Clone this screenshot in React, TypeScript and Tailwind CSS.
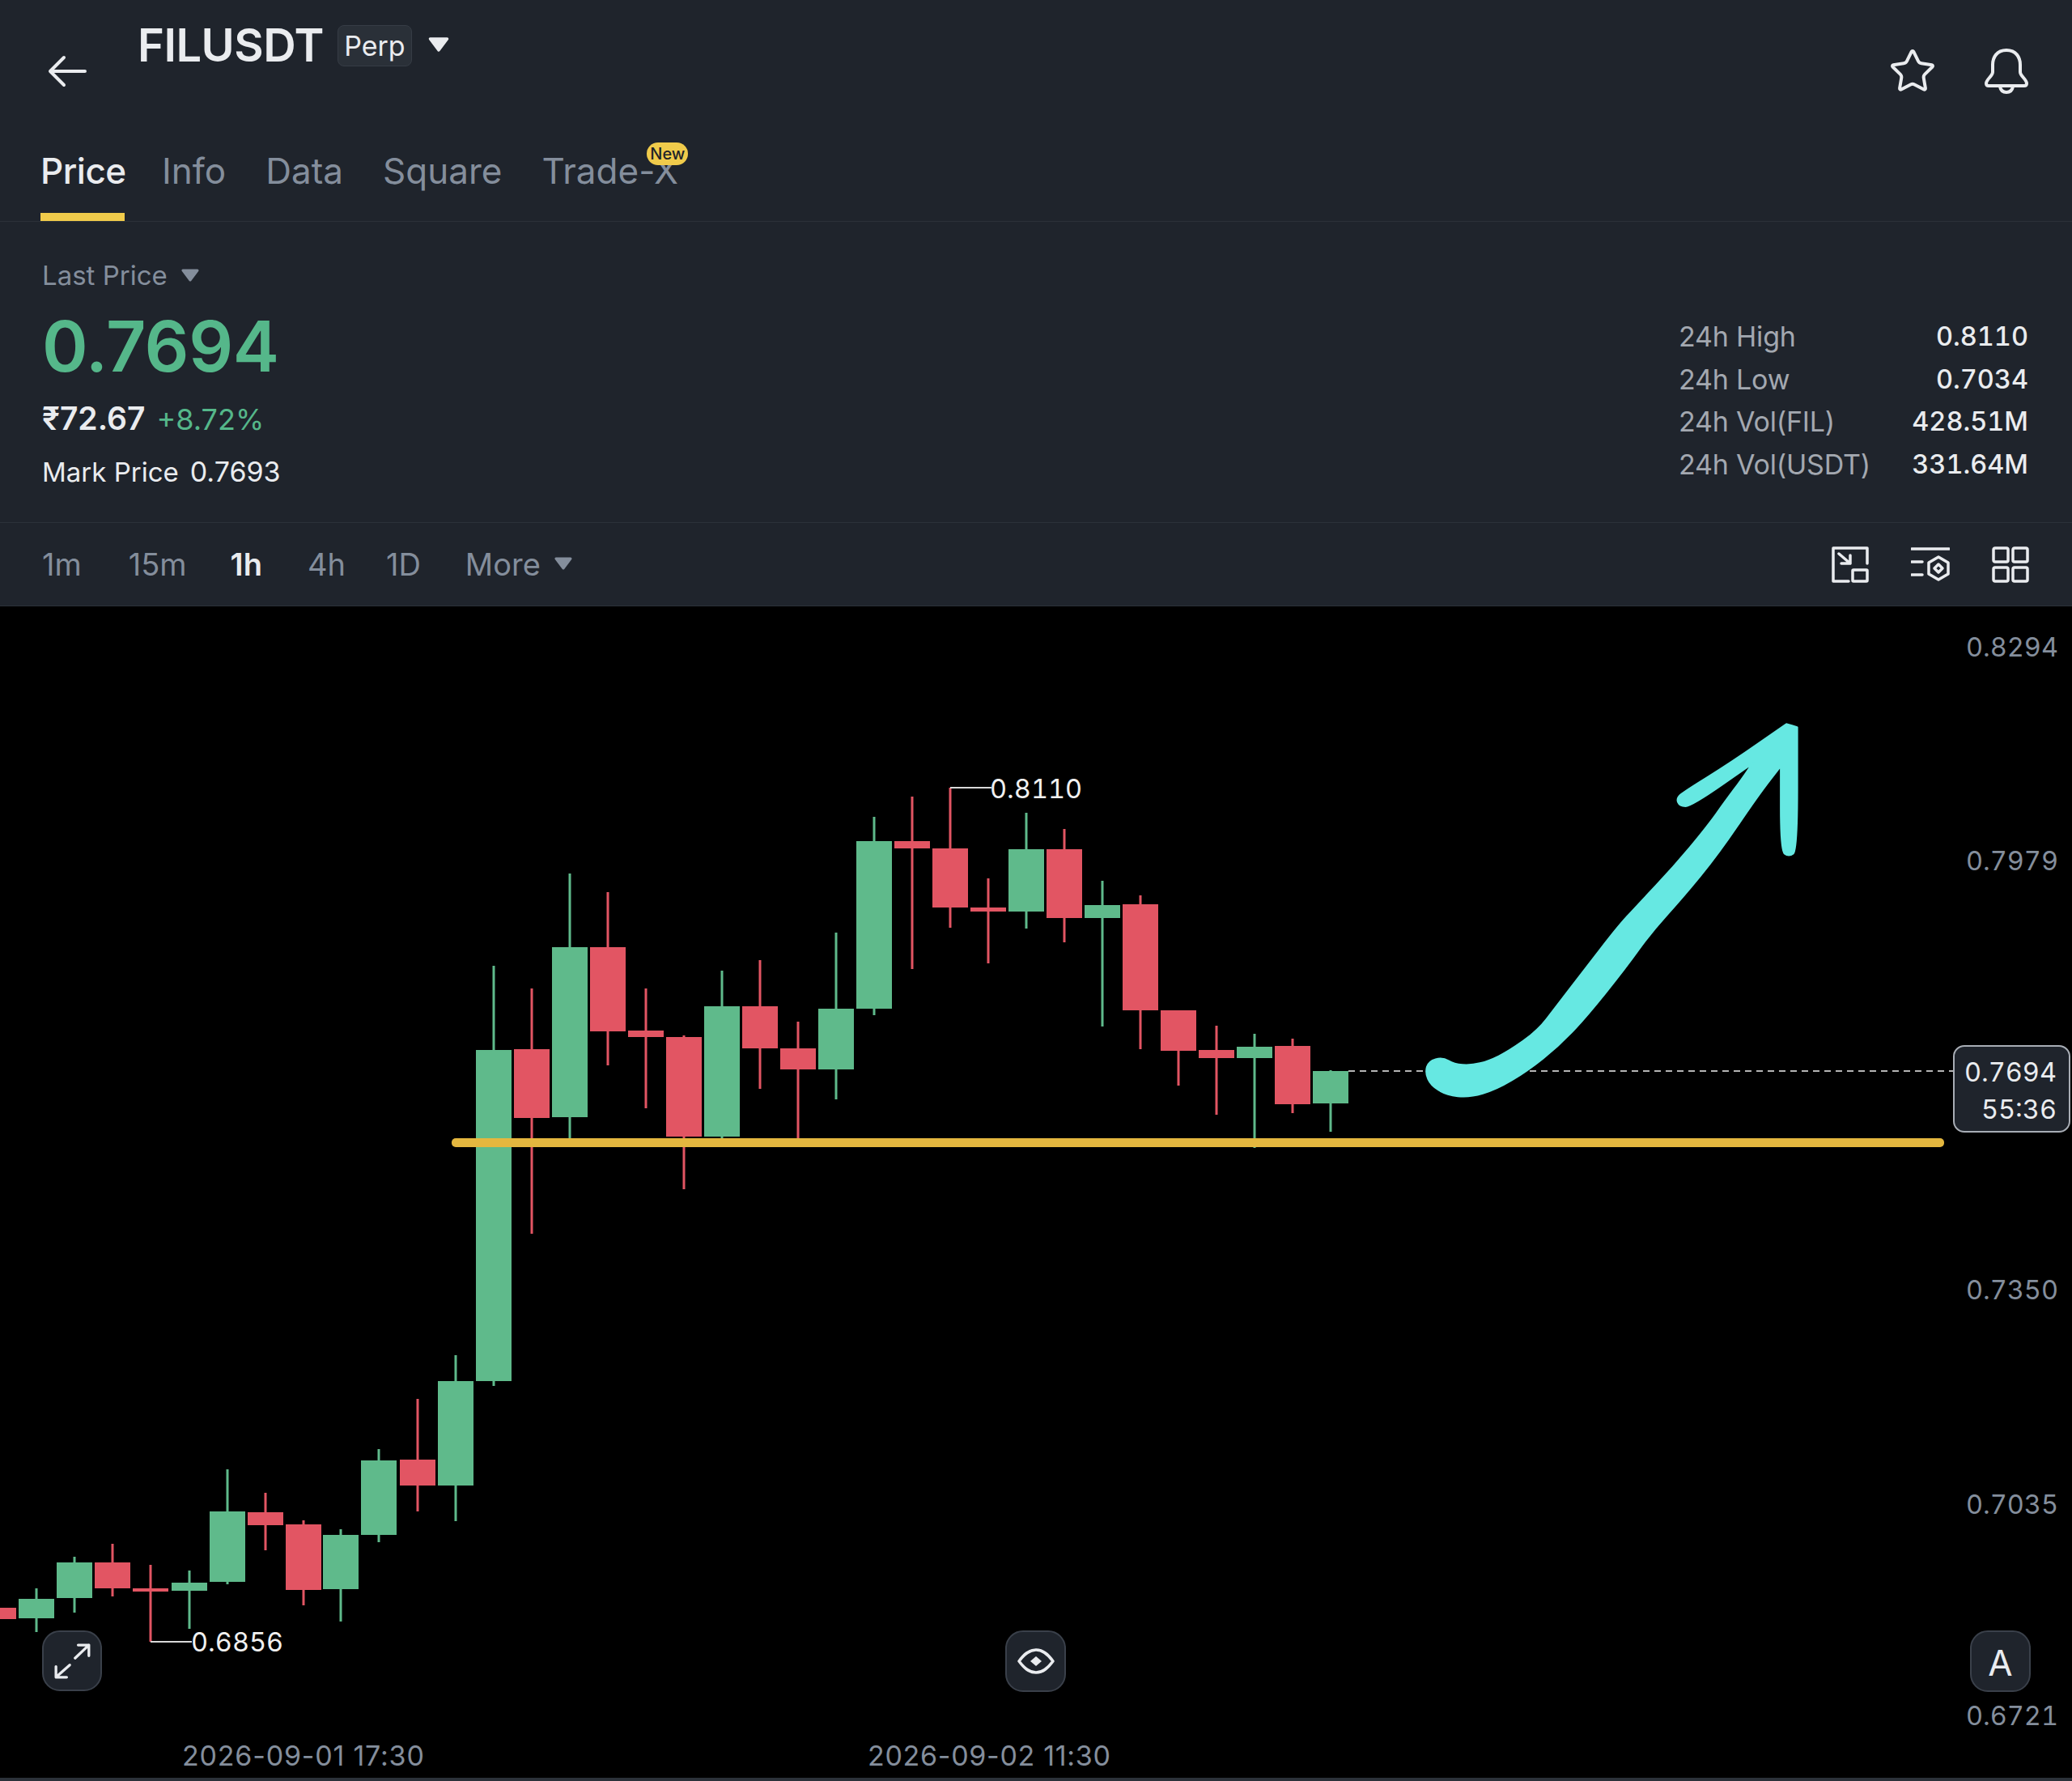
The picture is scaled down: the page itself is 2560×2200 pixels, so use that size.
import React from 'react';
import { Star } from 'lucide-react';

// [centre x, body top, body bottom, wick top, wick bottom, green?]
type Candle = [number, number, number, number, number, boolean];

const GREEN = '#5fba8b';
const RED = '#e25563';

const CANDLES: Candle[] = [
  [-2, 1986, 2000, 1930, 2000, false],
  [45, 1975, 1999, 1962, 2016, true],
  [92, 1930, 1974, 1923, 1992, true],
  [139, 1930, 1962, 1907, 1972, false],
  [186, 1962, 1966, 1933, 2028, false],
  [234, 1955, 1965, 1940, 2012, true],
  [281, 1867, 1954, 1815, 1957, true],
  [328, 1868, 1884, 1844, 1915, false],
  [375, 1883, 1964, 1878, 1983, false],
  [421, 1896, 1963, 1889, 2003, true],
  [468, 1804, 1896, 1790, 1905, true],
  [516, 1803, 1835, 1728, 1867, false],
  [563, 1706, 1835, 1674, 1879, true],
  [610, 1297, 1706, 1193, 1712, true],
  [657, 1296, 1381, 1221, 1524, false],
  [704, 1170, 1380, 1079, 1408, true],
  [751, 1170, 1274, 1102, 1316, false],
  [798, 1273, 1281, 1221, 1369, false],
  [845, 1281, 1404, 1279, 1469, false],
  [892, 1243, 1404, 1199, 1408, true],
  [939, 1243, 1295, 1186, 1345, false],
  [986, 1295, 1321, 1262, 1408, false],
  [1033, 1246, 1321, 1152, 1358, true],
  [1080, 1039, 1246, 1009, 1254, true],
  [1127, 1039, 1048, 984, 1197, false],
  [1174, 1048, 1121, 973, 1146, false],
  [1221, 1121, 1126, 1085, 1190, false],
  [1268, 1049, 1126, 1004, 1147, true],
  [1315, 1049, 1134, 1024, 1164, false],
  [1362, 1118, 1134, 1088, 1268, true],
  [1409, 1117, 1248, 1106, 1296, false],
  [1456, 1248, 1298, 1248, 1341, false],
  [1503, 1297, 1307, 1267, 1377, false],
  [1550, 1293, 1307, 1277, 1418, true],
  [1597, 1292, 1364, 1283, 1375, false],
  [1644, 1323, 1363, 1322, 1398, true],
];

const STATS = [
  ['24h High', '0.8110'],
  ['24h Low', '0.7034'],
  ['24h Vol(FIL)', '428.51M'],
  ['24h Vol(USDT)', '331.64M'],
];

// outline of the hand drawn arrow, read off a crop (1568 units square over 860x600).
// doubled points keep the corners sharp
const ARROW_POINTS = [
  [112, 1215], [120, 1178], [150, 1166], [175, 1188], [215, 1192], [255, 1178], [300, 1146], [365, 1080],
  [405, 1005], [470, 885], [545, 745], [590, 675], [672, 550], [745, 425], [790, 335], [825, 268],
  [850, 215], [850, 215], [710, 355], [685, 355], [678, 330], [695, 308], [800, 215], [925, 90], [925, 90],
  [948, 100], [948, 100], [948, 498], [930, 518], [913, 498], [913, 222], [913, 222], [860, 320], [770, 510],
  [690, 650], [620, 760], [560, 880], [470, 1040], [410, 1130], [340, 1210], [270, 1270], [210, 1295],
  [160, 1287], [125, 1257],
];

const smoothPath = (pts: number[][]) => {
  const mid = (a: number[], b: number[]) => `${(a[0] + b[0]) / 2} ${(a[1] + b[1]) / 2}`;
  let d = `M${mid(pts[pts.length - 1], pts[0])}`;
  pts.forEach((p, i) => {
    d += ` Q${p[0]} ${p[1]} ${mid(p, pts[(i + 1) % pts.length])}`;
  });
  return d + ' Z';
};

const Triangle = ({ className }: { className: string }) => (
  <svg viewBox="0 0 24 16" className={className} fill="currentColor" stroke="currentColor" strokeWidth="3" strokeLinejoin="round">
    <path d="M3 2 H21 L12 14 Z" />
  </svg>
);

const BackIcon = () => (
  <svg viewBox="0 0 48 40" className="w-[48px] h-[40px]" fill="none" stroke="#eaecef" strokeWidth="4" strokeLinecap="round" strokeLinejoin="round">
    <path d="M46 20 H3 M20 3 L3 20 L20 37" />
  </svg>
);

const BellIcon = () => (
  <svg viewBox="0 0 54 56" className="w-[54px] h-[56px]" fill="none" stroke="#eaecef" strokeWidth="4" strokeLinejoin="round" strokeLinecap="round">
    <path d="M27 2 C15 2 10 11 10 20 V29 C10 34 2 38 2 43 C2 45 3 46 5 46 H49 C51 46 52 45 52 43 C52 38 44 34 44 29 V20 C44 11 39 2 27 2 Z" />
    <path d="M19 47 C20 52 23 54 27 54 C31 54 34 52 35 47" />
  </svg>
);

const PipIcon = () => (
  <svg viewBox="0 0 46 45" className="w-[46px] h-[45px]" fill="none" stroke="#eaecef" strokeWidth="3.5" strokeLinejoin="round" strokeLinecap="round">
    <path d="M44 21 V2 H2 V43 H21" />
    <rect x="26" y="29" width="18" height="14" rx="1" />
    <path d="M9 9 L23 21 M23 11 V21 H12" />
  </svg>
);

const IndicatorIcon = () => (
  <svg viewBox="0 0 48 45" className="w-[48px] h-[45px]" fill="none" stroke="#eaecef" strokeWidth="3.5" strokeLinejoin="round" strokeLinecap="round">
    <path d="M1 3 H47 M1 19 H14 M1 35 H14" />
    <path d="M34 13 L46 20 V34 L34 41 L22 34 V20 Z" />
    <path d="M34 22 L39 27 L34 32 L29 27 Z" />
  </svg>
);

const GridIcon = () => (
  <svg viewBox="0 0 46 45" className="w-[46px] h-[45px]" fill="none" stroke="#eaecef" strokeWidth="3.5" strokeLinejoin="round">
    <rect x="2" y="2" width="18" height="17" rx="2" />
    <rect x="26" y="2" width="18" height="17" rx="2" />
    <rect x="2" y="26" width="18" height="17" rx="2" />
    <rect x="26" y="26" width="18" height="17" rx="2" />
  </svg>
);

const ExpandIcon = () => (
  <svg viewBox="0 0 74 75" className="w-[74px] h-[75px]" fill="none" stroke="#eaecef" strokeWidth="3.5" strokeLinecap="round" strokeLinejoin="round">
    <path d="M41 34 L59 17 M45 17 H59 V31" />
    <path d="M34 43 L16 59 M16 45 V59 H30" />
  </svg>
);

const EyeIcon = () => (
  <svg viewBox="0 0 48 34" className="w-[48px] h-[34px]" fill="none" stroke="#eaecef" strokeWidth="3.5" strokeLinejoin="round">
    <path d="M3 17 C9 9 15 3 24 3 C33 3 39 9 45 17 C39 25 33 31 24 31 C15 31 9 25 3 17 Z" />
    <path d="M24 11 L31 17 L24 23 L17 17 Z" fill="#eaecef" stroke="none" />
  </svg>
);

const HandArrow = () => (
  <svg x="1700" y="860" width="860" height="600" viewBox="0 0 1568 1568" preserveAspectRatio="none">
    <path fill="#66e8e2" stroke="#66e8e2" strokeWidth="6" strokeLinejoin="round" d={smoothPath(ARROW_POINTS)} />
  </svg>
);

const PriceChart = () => (
  <svg viewBox="0 749 2560 1446" className="absolute inset-0 w-[2560px] h-[1446px]">
    {CANDLES.map(([x, top, bottom, wickTop, wickBottom, up], i) => {
      const color = up ? GREEN : RED;
      return (
        <g key={i} fill={color}>
          <rect x={x - 1.5} y={wickTop} width="3" height={wickBottom - wickTop} />
          <rect x={x - 22} y={top} width="44" height={bottom - top} />
        </g>
      );
    })}
    <path d="M186 2028 H237 M1174 973 H1225" stroke="#d8d8d8" strokeWidth="2" />
    <path d="M1666 1323 H2414" stroke="#b5b5b5" strokeWidth="2" strokeDasharray="8 6" />
    <rect x="558" y="1406" width="1844" height="11" rx="5" fill="#e4b73f" />
    <HandArrow />
  </svg>
);

const App: React.FC = () => {
  return (
    <div className="w-[2560px] h-[2200px] flex flex-col bg-[#1f242c] text-[#eaecef] font-['Inter',sans-serif] overflow-hidden">
      {/* title bar */}
      <div className="h-[150px] flex items-start pl-[59px] pr-[54px]">
        <div className="mt-[68px]">
          <BackIcon />
        </div>
        <div className="ml-[63px] mt-[30px] flex items-center">
          <span className="text-[56px] leading-[52px] font-semibold tracking-[-0.5px]">FILUSDT</span>
          <span className="ml-[17px] h-[51px] w-[92px] flex items-center justify-center rounded-[8px] bg-[#2a3038] border border-[#363c45] text-[34px] font-normal">Perp</span>
          <Triangle className="ml-[19px] w-[28px] h-[20px] text-[#eaecef] -mt-[2px]" />
        </div>
        <div className="ml-auto mt-[58px] flex items-center gap-[59px]">
          <Star className="w-[60px] h-[60px] text-[#eaecef]" strokeWidth={1.6} />
          <BellIcon />
        </div>
      </div>

      {/* tabs */}
      <div className="h-[124px] flex items-stretch gap-[49px] pl-[50px] border-b border-[#2b3139] text-[44px] leading-[52px] font-normal text-[#848e9c]">
        <div className="pt-[35px] border-b-[10px] border-[#f0cb4b] text-[#eaecef] font-medium tracking-[-0.5px] w-[104px] -mr-[3px]">Price</div>
        <div className="pt-[35px]">Info</div>
        <div className="pt-[35px]">Data</div>
        <div className="pt-[35px]">Square</div>
        <div className="pt-[35px] relative">
          Trade-X
          <span className="absolute left-[130px] top-[26px] w-[51px] h-[28px] rounded-[14px] bg-[#f0cb4b] text-[#1e2329] text-[20px] leading-[28px] text-center font-medium">New</span>
        </div>
      </div>

      {/* price summary */}
      <div className="h-[372px] flex justify-between pl-[52px] pr-[54px] border-b border-[#2b3139]">
        <div className="pt-[46px] flex flex-col">
          <div className="flex items-center gap-[16px] text-[33px] leading-[40px] text-[#848e9c]">
            Last Price
            <Triangle className="w-[24px] h-[16px]" />
          </div>
          <div className="mt-[25px] text-[86px] leading-[86px] font-semibold text-[#55b78a] tracking-[-0.5px]">0.7694</div>
          <div className="mt-[26px] flex items-baseline gap-[14px] leading-[40px]">
            <span className="text-[39px] font-semibold">₹72.67</span>
            <span className="text-[36px] text-[#55b78a]">+8.72%</span>
          </div>
          <div className="mt-[25px] flex items-baseline gap-[14px] text-[33px] leading-[40px]">
            <span>Mark Price</span>
            <span className="text-[34px]">0.7693</span>
          </div>
        </div>
        <div className="pt-[116px] w-[432px] flex flex-col text-[34px] leading-[52px]">
          {STATS.map(([label, value]) => (
            <div key={label} className="h-[52.5px] flex justify-between items-center">
              <span className="text-[#a3a8b0] tracking-[-0.2px]">{label}</span>
              <span className="font-medium text-[32.5px] tabular-nums">{value}</span>
            </div>
          ))}
        </div>
      </div>

      {/* interval bar */}
      <div className="h-[103px] shrink-0 flex items-center pl-[52px] pr-[53px] text-[38px] text-[#848e9c] border-b border-[#2b3139]">
        <span>1m</span>
        <span className="ml-[58px]">15m</span>
        <span className="ml-[54px] text-[#eaecef] font-semibold">1h</span>
        <span className="ml-[56px]">4h</span>
        <span className="ml-[50px]">1D</span>
        <span className="ml-[55px]">More</span>
        <Triangle className="ml-[16px] w-[24px] h-[16px] -mt-[2px]" />
        <div className="ml-auto flex items-center gap-[52px]">
          <PipIcon />
          <IndicatorIcon />
          <GridIcon />
        </div>
      </div>

      {/* chart */}
      <div className="relative flex-1 bg-black text-[32.5px] leading-[40px] tabular-nums">
        <PriceChart />

        <span className="absolute right-[17px] top-[31px] text-[#848e9c]">0.8294</span>
        <span className="absolute right-[17px] top-[295px] text-[#848e9c]">0.7979</span>
        <span className="absolute right-[17px] top-[825px] text-[#848e9c]">0.7350</span>
        <span className="absolute right-[17px] top-[1090px] text-[#848e9c]">0.7035</span>
        <span className="absolute right-[17px] top-[1351px] text-[#848e9c]">0.6721</span>

        <span className="absolute left-[1223px] top-[206px] text-[#f0f0f0]">0.8110</span>
        <span className="absolute left-[236px] top-[1260px] text-[#f0f0f0]">0.6856</span>

        <span className="absolute left-[225px] top-[1400px] text-[34px] tracking-[0.8px] [font-variant-numeric:normal] text-[#848e9c]">2026-09-01 17:30</span>
        <span className="absolute left-[1072px] top-[1400px] text-[34px] tracking-[0.7px] [font-variant-numeric:normal] text-[#848e9c]">2026-09-02 11:30</span>

        <div className="absolute left-[2413px] top-[542px] w-[145px] h-[108px] pt-[9px] pr-[15px] text-right rounded-[14px] bg-[#1f242c] border-2 border-[#a8adb5] text-[#eaecef] leading-[46px]">
          <div>0.7694</div>
          <div>55:36</div>
        </div>

        <div className="absolute left-[52px] top-[1265px] w-[74px] h-[75px] rounded-[22px] bg-[#1f242c] border-2 border-[#3a404a] flex items-center justify-center">
          <ExpandIcon />
        </div>
        <div className="absolute left-[1242px] top-[1265px] w-[75px] h-[76px] rounded-[22px] bg-[#1f242c] border-2 border-[#3a404a] flex items-center justify-center">
          <EyeIcon />
        </div>
        <div className="absolute left-[2434px] top-[1265px] w-[75px] h-[76px] rounded-[22px] bg-[#1f242c] border-2 border-[#3a404a] flex items-center justify-center pt-[4px] text-[44px] text-[#eaecef]">
          A
        </div>
      </div>

      {/* bottom edge */}
      <div className="h-[4px] shrink-0 bg-[#2b3139]" />
    </div>
  );
};

export default App;
